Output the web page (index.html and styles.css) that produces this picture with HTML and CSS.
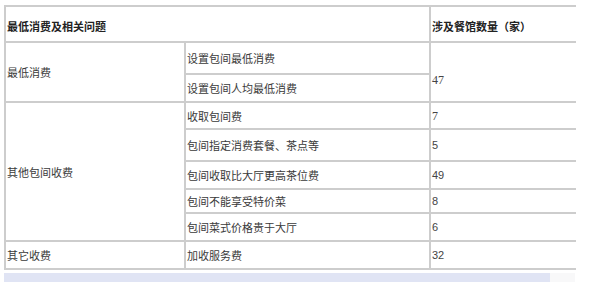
FILE: index.html
```html
<!DOCTYPE html>
<html lang="zh-CN">
<head>
<meta charset="utf-8">
<link rel="stylesheet" href="styles.css">
</head>
<body>
<div class="page">
  <table class="stats">
    <colgroup>
      <col class="c1"><col class="c2"><col class="c3">
    </colgroup>
    <tr class="h-head">
      <th colspan="2">最低消费及相关问题</th>
      <th>涉及餐馆数量（家）</th>
    </tr>
    <tr class="h32">
      <td rowspan="2">最低消费</td>
      <td>设置包间最低消费</td>
      <td rowspan="2" class="num serif low">47</td>
    </tr>
    <tr class="h28">
      <td>设置包间人均最低消费</td>
    </tr>
    <tr class="h27">
      <td rowspan="5">其他包间收费</td>
      <td>收取包间费</td>
      <td class="num serif">7</td>
    </tr>
    <tr class="h32">
      <td>包间指定消费套餐、茶点等</td>
      <td class="num">5</td>
    </tr>
    <tr class="h28">
      <td>包间收取比大厅更高茶位费</td>
      <td class="num">49</td>
    </tr>
    <tr class="h24">
      <td>包间不能享受特价菜</td>
      <td class="num">8</td>
    </tr>
    <tr class="h28">
      <td>包间菜式价格贵于大厅</td>
      <td class="num">6</td>
    </tr>
    <tr class="h28">
      <td>其它收费</td>
      <td>加收服务费</td>
      <td class="num">32</td>
    </tr>
  </table>
  <div class="scrollbar">
    <div class="thumb"></div>
    <div class="track"></div>
  </div>
</div>
</body>
</html>
```
FILE: styles.css
```css
html, body {
  margin: 0;
  padding: 0;
  background: #ffffff;
}
.page {
  padding: 5px 0 0 4px;
  width: 571px;
}
.stats {
  border-collapse: collapse;
  table-layout: fixed;
  width: 571px;
  font-family: "Noto Sans CJK SC", "Liberation Sans", sans-serif;
  font-size: 11px;
  color: #3a3a3a;
}
.c1 { width: 180px; }
.c2 { width: 245px; }
.c3 { width: 146px; }
.stats th, .stats td {
  border: 2px solid #cdcdcd;
  padding: 0 0 0 1px;
  text-align: left;
  vertical-align: middle;
  line-height: 14px;
}
.stats tr > :last-child { border-right: none; }
.stats th {
  font-weight: bold;
  color: #222;
}
.h-head { height: 36px; }
.h-head th { padding-top: 3px; }
.h32 { height: 32px; }
.h28 { height: 28px; }
.h27 { height: 27px; }
.h24 { height: 24px; }
.num {
  font-family: "Liberation Sans", Arial, sans-serif;
  font-size: 11px;
  color: #444;
}
.num.serif {
  font-family: "Liberation Serif", "Times New Roman", serif;
  font-size: 12px;
}
.num.low { padding-top: 16px; }
.scrollbar {
  display: flex;
  margin-top: 3px;
  height: 9px;
}
.thumb {
  width: 546px;
  background: #e0e4f4;
}
.track {
  flex: 1;
  background: #f8f8f9;
}
```
